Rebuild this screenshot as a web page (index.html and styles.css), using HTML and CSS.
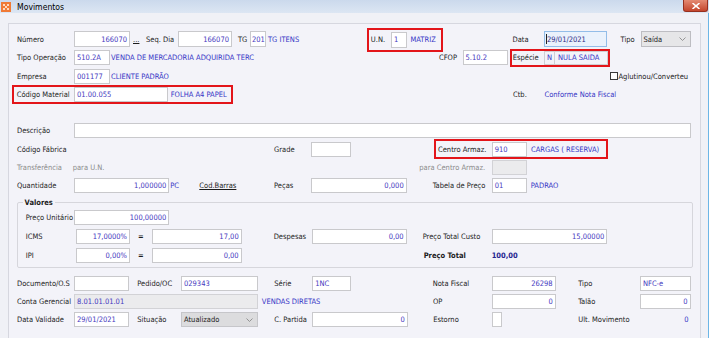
FILE: index.html
```html
<!DOCTYPE html>
<html lang="pt-BR">
<head>
<meta charset="utf-8">
<title>Movimentos</title>
<link rel="stylesheet" href="styles.css">
</head>
<body>
<div class="window">
  <div class="titlebar">
    <svg class="app-icon" viewBox="0 0 10 10" aria-hidden="true">
      <rect width="10" height="10" fill="#f07a35"/>
      <path d="M2 2h2v2H2zM6 2h2v2H6zM4 4h2v2H4zM2 6h2v2H2zM6 6h2v2H6z" fill="#ffd9bf"/>
    </svg>
    <span class="title">Movimentos</span>
    <div class="close">
      <svg viewBox="0 0 8 6" aria-hidden="true"><path d="M1 0.5L7 5.5M7 0.5L1 5.5" stroke="#fff" stroke-width="1.6" stroke-linecap="round"/></svg>
    </div>
  </div>
  <div class="client">
    <div class="panel">
      <div class="top-rows">
        <div class="row r1">
          <span class="lbl">Número</span>
          <div class="fld num tall">166070</div>
          <span class="dots">...</span>
          <span class="lbl">Seq. Dia</span>
          <div class="fld num tall">166070</div>
          <span class="lbl pl6">TG</span>
          <div class="fld tall tight">201</div>
          <span class="desc pl2">TG ITENS</span>
          <div class="mark mark-un">
            <span class="lbl un-lbl">U.N.</span>
            <div class="fld tall un-fld">1</div>
            <span class="desc un-desc">MATRIZ</span>
          </div>
          <span class="lbl">Data</span>
          <div class="fld tall focus"><span class="caret"></span>29/01/2021</div>
          <span class="lbl pl13">Tipo</span>
          <div class="sel tall">Saída<svg class="chev" viewBox="0 0 7 4" aria-hidden="true"><path d="M0.5 0.5L3.5 3.5L6.5 0.5" fill="none" stroke="#8a8a8a" stroke-width="0.9"/></svg></div>
        </div>
        <div class="row r2">
          <span class="lbl">Tipo Operação</span>
          <div class="fld">510.2A</div>
          <span class="desc pl1">VENDA DE MERCADORIA ADQUIRIDA TERC</span>
          <span class="lbl">CFOP</span>
          <div class="fld">5.10.2</div>
          <div class="mark mark-esp">
            <span class="lbl esp-lbl">Espécie</span>
            <div class="cell esp-n">N</div>
            <div class="cell esp-d">NULA SAIDA</div>
          </div>
        </div>
        <div class="row r3">
          <span class="lbl">Empresa</span>
          <div class="fld">001177</div>
          <span class="desc pl1">CLIENTE PADRÃO</span>
          <div class="check"><span class="box"></span><span class="lbl">Aglutinou/Converteu</span></div>
        </div>
        <div class="row r4">
          <div class="mark mark-cm">
            <span class="lbl cm-lbl">Código Material</span>
            <div class="fld cm-fld">01.00.055</div>
            <span class="desc cm-desc">FOLHA A4 PAPEL</span>
          </div>
          <span></span>
          <span class="lbl">Ctb.</span>
          <span class="desc">Conforme Nota Fiscal</span>
        </div>
      </div>

      <div class="mid-rows">
        <div class="row r5">
          <span class="lbl">Descrição</span>
          <div class="fld"></div>
        </div>
        <div class="row r6">
          <span class="lbl">Código Fábrica</span>
          <span class="lbl">Grade</span>
          <div class="fld"></div>
          <span></span>
          <div class="mark mark-ca">
            <span class="lbl ca-lbl">Centro Armaz.</span>
            <div class="fld ca-fld">910</div>
            <span class="desc ca-desc">CARGAS ( RESERVA)</span>
          </div>
        </div>
        <div class="row r7">
          <span class="lbl muted">Transferência</span>
          <span class="lbl muted">para U.N.</span>
          <span class="lbl muted">para Centro Armaz.</span>
          <div class="fld dis"></div>
        </div>
        <div class="row r8">
          <span class="lbl">Quantidade</span>
          <div class="fld num">1,000000</div>
          <span class="desc pl1">PC</span>
          <span class="lbl link">Cod.Barras</span>
          <span class="lbl">Peças</span>
          <div class="fld num">0,000</div>
          <span class="lbl pl26">Tabela de Preço</span>
          <div class="fld">01</div>
          <span class="desc pl3">PADRAO</span>
        </div>
      </div>

      <fieldset class="values">
        <legend>Valores</legend>
        <div class="row g1">
          <span class="lbl">Preço Unitário</span>
          <div class="fld num">100,00000</div>
        </div>
        <div class="row g2">
          <span class="lbl">ICMS</span>
          <div class="fld num">17,0000%</div>
          <span class="lbl pl8 eq">=</span>
          <div class="fld num">17,00</div>
          <span class="lbl pl32">Despesas</span>
          <div class="fld num">0,00</div>
          <span class="lbl pl16">Preço Total Custo</span>
          <div class="fld num">15,00000</div>
        </div>
        <div class="row g3">
          <span class="lbl">IPI</span>
          <div class="fld num">0,00%</div>
          <span class="lbl pl8 eq">=</span>
          <div class="fld num">0,00</div>
          <span class="lbl strong pl182">Preço Total</span>
          <span class="total">100,00</span>
        </div>
      </fieldset>

      <div class="bottom-rows">
        <div class="row b1">
          <span class="lbl">Documento/O.S</span>
          <div class="fld"></div>
          <span class="lbl pl8">Pedido/OC</span>
          <div class="fld">029343</div>
          <span class="lbl pl16">Série</span>
          <div class="fld">1NC</div>
          <span class="lbl pl82">Nota Fiscal</span>
          <div class="fld num">26298</div>
          <span class="lbl pl22">Tipo</span>
          <div class="fld">NFC-e</div>
        </div>
        <div class="row b2">
          <span class="lbl">Conta Gerencial</span>
          <div class="fld dis">8.01.01.01.01</div>
          <span class="desc pl3">VENDAS DIRETAS</span>
          <span class="lbl">OP</span>
          <div class="fld num">0</div>
          <span class="lbl pl22">Talão</span>
          <div class="fld num">0</div>
        </div>
        <div class="row b3">
          <span class="lbl">Data Validade</span>
          <div class="fld">29/01/2021</div>
          <span class="lbl pl8">Situação</span>
          <div class="sel dis-sel">Atualizado<svg class="chev" viewBox="0 0 7 4" aria-hidden="true"><path d="M0.5 0.5L3.5 3.5L6.5 0.5" fill="none" stroke="#8a8a8a" stroke-width="0.9"/></svg></div>
          <span class="lbl pl16">C. Partida</span>
          <div class="fld num">0</div>
          <span class="lbl pl25">Estorno</span>
          <div class="fld estorno"></div>
          <span class="lbl pl76">Ult. Movimento</span>
          <span class="desc right">0</span>
        </div>
      </div>
    </div>
  </div>
</div>
</body>
</html>
```

FILE: styles.css
```css
* { box-sizing: border-box; }
html, body { margin: 0; padding: 0; }
body {
  width: 709px;
  height: 338px;
  overflow: hidden;
  background: #eff0f6;
  font-family: "DejaVu Sans", "Liberation Sans", sans-serif;
  font-stretch: condensed;
  font-size: 7.5px;
  color: #1c1c1c;
}
.window { height: 338px; display: flex; flex-direction: column; }

.titlebar {
  height: 13px;
  flex: none;
  display: flex;
  align-items: center;
  background: linear-gradient(#cbd9ec, #dce6f3);
}
.app-icon { width: 10px; height: 10px; margin: 0 6px 0 1px; }
.title { font-size: 8.6px; color: #000; }
.close {
  margin-left: auto;
  align-self: flex-start;
  width: 25px;
  height: 12px;
  margin-right: 1px;
  background: linear-gradient(#e48a72, #c4462d);
  border: 1px solid #96301f;
  border-top: none;
  border-radius: 0 0 3px 3px;
  display: flex;
  align-items: center;
  justify-content: center;
}
.close svg { width: 8px; height: 6px; }

.client {
  flex: 1;
  padding: 10px 7px 0 8px;
  border-right: 1px solid #6cb6e6;
  background: #f0f1f6;
}
.panel {
  height: 100%;
  border: 1px solid #d6d7df;
  border-bottom: none;
  background: #f3f3f9;
  padding: 5.75px 0 0 8px;
}

.row { display: grid; align-items: center; white-space: nowrap; }
.top-rows .row { grid-template-rows: 18.5px; }
.mid-rows { margin-top: 17.85px; }
.mid-rows .row { grid-template-rows: 18.4px; }
.values .row { grid-template-rows: 18.7px; }
.bottom-rows { margin-top: 5.8px; }
.bottom-rows .row { grid-template-rows: 18.3px; }

.lbl { color: #1c1c1c; }
.muted { color: #8c8c8c; }
.desc { color: #3535c6; }
.strong { font-weight: bold; }
.link { text-decoration: underline; }
.dots { padding-left: 3px; text-decoration: underline; color: #1c1c1c; }
.right { text-align: right; padding-right: 2px; }

.pl1 { padding-left: 1px; }
.pl2 { padding-left: 2px; }
.pl3 { padding-left: 3.5px; }
.pl6 { padding-left: 6px; }
.pl8 { padding-left: 8px; }
.pl13 { padding-left: 13.5px; }
.pl16 { padding-left: 16px; }
.pl22 { padding-left: 22.5px; }
.pl25 { padding-left: 25.5px; }
.pl26 { padding-left: 26px; }
.pl32 { padding-left: 32px; }
.pl76 { padding-left: 76px; }
.pl82 { padding-left: 82px; }
.pl182 { padding-left: 182px; }

.fld {
  height: 15px;
  border: 1px solid #c9c9cc;
  background: #fff;
  color: #4438c0;
  padding: 0 2px;
  display: flex;
  align-items: center;
  overflow: hidden;
}
.fld.tall { height: 16px; }
.fld.num { justify-content: flex-end; }
.fld.tight { padding: 0 1px; }
.fld.dis { background: #ebebed; border-color: #d2d2d6; }
.fld.focus {
  background: #eaf2fc;
  border-color: #93bde8;
  color: #2c2a86;
  padding-left: 1px;
}
.caret { width: 1px; height: 10px; background: #222; margin-right: 0; }
.fld.estorno { width: 10.6px; height: 14.5px; }

.sel {
  height: 15px;
  border: 1px solid #bdbdc2;
  background: #e6e6e8;
  color: #222;
  padding: 0 4px 0 2px;
  display: flex;
  align-items: center;
  justify-content: space-between;
}
.sel.tall { height: 16px; }
.sel.dis-sel { background: #dcdcde; border-color: #c6c6ca; }
.chev { width: 7px; height: 4px; }

.mark { border: 2px solid #e3151a; display: flex; align-items: center; }

.r1 { grid-template-columns: 57px 56px 16px 32px 54px 18px 16px 100.5px 146px 31.5px 63px 33.5px 50px; }
.mark-un { width: 76.5px; height: 24px; justify-self: start; margin-top: 1.4px; }
.un-lbl { width: 22.5px; padding-left: 2.3px; }
.un-fld { width: 16px; }
.un-desc { margin-left: 3.5px; }

.r2 { grid-template-columns: 57px 36px 329px 23.5px 45px 102.5px; }
.mark-esp { width: 100.5px; height: 18px; margin-left: 2px; }
.esp-lbl { width: 32.5px; padding-left: 1.2px; }
.cell {
  height: 14px;
  border: 1px solid #cfcfd4;
  display: flex;
  align-items: center;
  color: #3535c6;
  padding-left: 2px;
}
.esp-n { width: 11px; }
.esp-d { width: 53px; border-left: none; padding-left: 3px; }

.r3 { grid-template-columns: 57px 36px 500px auto; }
.check { display: flex; align-items: center; }
.box { width: 8px; height: 8px; border: 1px solid #3a3a3a; background: #fff; margin-right: 0.5px; }

.r4 { grid-template-columns: 216.5px 279.5px 31.5px auto; }
.mark-cm { width: 221.6px; height: 19px; margin-left: -5.3px; }
.cm-lbl { width: 60.3px; padding-left: 3px; }
.cm-fld { width: 94.3px; }
.cm-desc { margin-left: 2.4px; }

.r5 { grid-template-columns: 57px 617px; }
.r6 { grid-template-columns: 257px 37px 40px 83px 174.3px; }
.mark-ca { width: 174.3px; height: 20px; }
.ca-lbl { width: 55.7px; padding-left: 2px; }
.ca-fld { width: 35.6px; }
.ca-desc { margin-left: 3.7px; }
.r7 { grid-template-columns: 55.7px 346.6px 72.4px 35.6px; }
.r8 { grid-template-columns: 57px 95.3px 30px 74.7px 37px 95.7px 85px 35.6px auto; }

.values {
  margin: 3px 6.7px 0 0.3px;
  padding: 1.45px 0 2.5px 7.4px;
  border: 1px solid #d6d6dc;
  border-radius: 2px;
  min-inline-size: 0;
}
.values legend {
  padding: 0 2px;
  margin-left: -3.1px;
  font-weight: bold;
  line-height: 9px;
  color: #1c1c1c;
}
.g1 { grid-template-columns: 48.3px 95.3px; }
.g2 { grid-template-columns: 50.3px 54px 21.7px 90px 70.6px 94.4px 85px 115.6px; }
.g3 { grid-template-columns: 50.3px 54px 21.7px 90px 250px auto; }
.eq { font-weight: bold; }
.total { font-weight: bold; color: #25258f; }

.b1 { grid-template-columns: 57px 55.3px 51.7px 77.3px 54px 38.4px 141px 64px 84.3px 50.7px; }
.b2 { grid-template-columns: 57px 184.3px 174.7px 58.7px 64px 84.3px 50.7px; }
.b3 { grid-template-columns: 57px 55.3px 51.7px 77.3px 54px 95.4px 84px 10.6px 137.7px 50.7px; }
```
